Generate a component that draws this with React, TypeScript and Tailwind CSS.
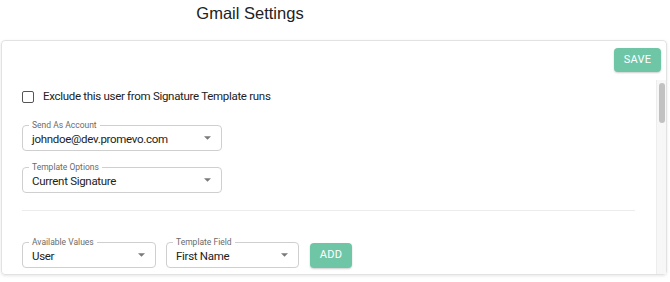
import React from "react";

const Select = ({ label, value, width }: { label: string; value: string; width: string }) => {
  return (
    <div className={`relative ${width} h-[26px] border border-[#cfcfcf] rounded-[4px] flex items-center justify-between pl-[9px] pr-[10px]`}>
      <span className="absolute -top-[7px] left-[6px] bg-white px-[3px] text-[8.5px] leading-[12px] text-[#6b6b6b]">
        {label}
      </span>
      <span className="text-[11.5px] tracking-[-0.3px] text-[#222] leading-none pt-[3px]">{value}</span>
      <svg width="7" height="4" viewBox="0 0 10 5">
        <path d="M0 0 L10 0 L5 5 Z" fill="#7a7a7a" />
      </svg>
    </div>
  );
};

const GreenButton = ({ text, size }: { text: string; size: string }) => (
  <button className={`${size} rounded-[4px] bg-[#6fc6a7] text-white text-[11px] tracking-[0.3px] shadow-[0_1px_2px_rgba(0,0,0,0.2)] flex items-center justify-center`}>
    {text}
  </button>
);

const App = () => {
  return (
    <div className="w-[670px] h-[282px] bg-white overflow-hidden font-['Roboto',Arial,sans-serif]">
      {/* Title */}
      <div className="w-[500px] h-[40px] flex items-center justify-center">
        <h1 className="text-[16.5px] text-[#222] -mt-[13px] font-['Liberation_Sans',Arial,sans-serif]">Gmail Settings</h1>
      </div>

      {/* Card */}
      <div className="ml-[1px] w-[666px] h-[235px] border border-[#e2e2e2] rounded-[4px] shadow-[0_1px_3px_rgba(0,0,0,0.1)] flex flex-col">
        <div className="h-[39px] flex justify-end items-start pt-[7px] pr-[5px]">
          <GreenButton text="SAVE" size="w-[47px] h-[24px]" />
        </div>

        <div className="flex-1 flex">
          <div className="flex-1 pl-[20px] pr-[21px]">
            <div className="flex items-center gap-[9px] mt-[8px]">
              <div className="w-[12px] h-[12px] border-[1.5px] border-[#555] rounded-[2px]" />
              <span className="text-[11.5px] tracking-[-0.3px] text-[#222]">Exclude this user from Signature Template runs</span>
            </div>

            <div className="mt-[20px] flex flex-col gap-[16px]">
              <Select label="Send As Account" value="johndoe@dev.promevo.com" width="w-[200px]" />
              <Select label="Template Options" value="Current Signature" width="w-[200px]" />
            </div>

            <div className="mt-[17px] h-px bg-[#ececec] w-[613px]" />

            <div className="mt-[31px] flex items-center gap-[10px]">
              <Select label="Available Values" value="User" width="w-[134px]" />
              <Select label="Template Field" value="First Name" width="w-[133px]" />
              <GreenButton text="ADD" size="w-[42px] h-[25px] ml-[1px]" />
            </div>
          </div>

          {/* scrollbar */}
          <div className="w-[11px] bg-[#f7f7f7] border-l border-[#ededed] flex justify-center pt-[3px]">
            <div className="w-[6px] h-[40px] rounded-[3px] bg-[#c1c1c1]" />
          </div>
        </div>
      </div>
    </div>
  );
};

export default App;
